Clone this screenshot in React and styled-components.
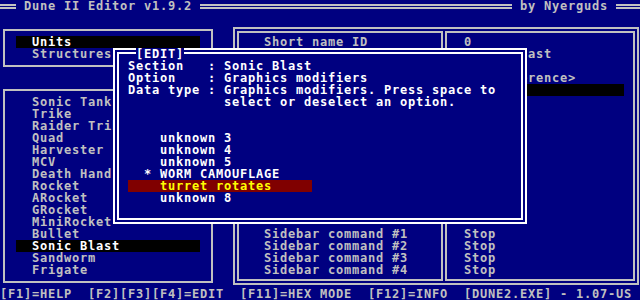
import React from 'react';
import styled, { createGlobalStyle, css } from 'styled-components';

const BLUE = '#000080';
const GREY = '#c0c0c0';
const WHITE = '#ffffff';

const GlobalStyle = createGlobalStyle`
  html, body {
    margin: 0;
    padding: 0;
    background: ${BLUE};
  }
  #root {
    width: 640px;
    height: 300px;
  }
`

// 80x25 text screen, 8x12 cells
const Screen = styled.div`
  position: relative;
  display: grid;
  grid-template-columns: repeat(80, 8px);
  grid-template-rows: repeat(25, 12px);
  width: 640px;
  height: 300px;
  overflow: hidden;
  background: ${BLUE};
  color: ${GREY};
  font-family: "DejaVu Sans Mono", "Liberation Mono", monospace;
  font-weight: bold;
  font-size: 12px;
  line-height: 12px;
  letter-spacing: 0.7754px;
  white-space: pre;
`

const TitleBar = styled.div`
  grid-column: 1 / -1;
  grid-row: 1;
  display: flex;
`

const Rule = styled.span`
  flex: none;
  width: ${p => p.$cols * 8}px;
  height: 0;
  margin-top: 4px;
  border-top: 5px double ${GREY};
`

const TitleText = styled.span`
  flex: none;
  height: 12px;
`

const Frame = styled.div`
  grid-column: ${p => p.$col + 1} / span ${p => p.$w};
  grid-row: ${p => p.$row + 1} / span ${p => p.$h};
  display: flex;
  flex-direction: column;
  min-width: 0;
  min-height: 0;
  overflow: hidden;
  ${p => p.$double ? css`
    margin: 3px 1px;
    border: 6px double ${p.$color || GREY};
    padding: 3px 1px;
  ` : css`
    margin: 5px 3px;
    border: 2px solid ${GREY};
    padding: 5px 3px;
  `}
`

// the popup sits a little higher in its cells than the panels do
const Dialog = styled(Frame)`
  position: relative;
  z-index: 10;
  overflow: visible;
  margin: 0 1px 4px;
  padding: 6px 1px 2px;
  background: ${BLUE};
  color: ${WHITE};
`

const DialogTitle = styled.span`
  position: absolute;
  top: -6px;
  left: 17px;
  height: 12px;
  background: ${BLUE};
  color: ${WHITE};
`

const ListItem = styled.div`
  flex: none;
  height: 12px;
  width: 184px;
  margin-left: 8px;
  padding-left: 16px;
  box-sizing: border-box;
  background: ${p => p.$active ? '#000000' : 'transparent'};
  color: ${p => p.$active ? WHITE : GREY};
`

const FieldRow = styled.div`
  flex: none;
  display: grid;
  grid-template-columns: 208px 1fr;
  height: 12px;
`

const FieldLabel = styled.span`
  padding-left: 24px;
  overflow: hidden;
`

const FieldValue = styled.span`
  margin-right: 8px;
  margin-left: 8px;
  padding-left: 8px;
  background: ${p => p.$active ? '#000000' : 'transparent'};
  color: ${p => p.$active ? WHITE : GREY};
`

const Divider = styled.div`
  grid-column: 56 / span 1;
  grid-row: 3 / span 22;
  position: relative;
  z-index: 1;
  margin: 7px 1px;
  border-left: 2px solid ${GREY};
  border-right: 2px solid ${GREY};
  background: ${BLUE};
`

const InfoRow = styled.div`
  flex: none;
  display: grid;
  grid-template-columns: 80px 16px 1fr;
  padding-left: 8px;
  line-height: 12px;
`

const Spacer = styled.div`
  flex: none;
  height: ${p => p.$rows * 12}px;
`

const OptionItem = styled.div`
  flex: none;
  display: flex;
  height: 12px;
  width: 184px;
  margin-left: 8px;
  padding-left: 16px;
  box-sizing: border-box;
  background: ${p => p.$active ? '#800000' : 'transparent'};
  color: ${p => p.$active ? '#ffff00' : WHITE};
`

const Mark = styled.span`
  flex: none;
  width: 16px;
`

const StatusBar = styled.div`
  grid-column: 1 / -1;
  grid-row: 25;
  display: flex;
  gap: 16px;
  color: ${GREY};
`

const sections = ['Units', 'Structures'];

const units = [
  'Sonic Tank', 'Trike', 'Raider Trike', 'Quad', 'Harvester', 'MCV',
  'Death Hand', 'Rocket', 'ARocket', 'GRocket', 'MiniRocket', 'Bullet',
  'Sonic Blast', 'Sandworm', 'Frigate',
];

const fields = [
  ['Short name ID', '0'],
  ['Short name', 'Sonic Blast'],
  ['Long name ID', '0'],
  ['Wsa file', '<No reference>'],
  ['Graphics modifiers', '0x0040', true],
  ['Hit points', '0'],
  ['Sight range', '0'],
  ['Sidebar icon', '0'],
  ['Cost', '0'],
  ['Build time', '0'],
  ['Tech level', '0'],
  ['Prerequisites', '0x00'],
  ['Build upgrades', '0'],
  ['Owner', '0x3F'],
  ['Movement type', 'Air'],
  ['', ''],
  ['Sidebar command #1', 'Stop'],
  ['Sidebar command #2', 'Stop'],
  ['Sidebar command #3', 'Stop'],
  ['Sidebar command #4', 'Stop'],
];

const options = [
  ['unknown 3'],
  ['unknown 4'],
  ['unknown 5'],
  ['WORM CAMOUFLAGE', true],
  ['turret rotates', false, true],
  ['unknown 8'],
];

const keys = [
  '[F1]=HELP', '[F2][F3][F4]=EDIT', '[F11]=HEX MODE', '[F12]=INFO',
  '[DUNE2.EXE] - 1.07-US',
];

export default function App() {
  return (
    <>
      <GlobalStyle />
      <Screen>
        <TitleBar>
          <Rule $cols={2} />
          <TitleText> Dune II Editor v1.9.2 </TitleText>
          <Rule $cols={39} />
          <TitleText> by Nyerguds </TitleText>
          <Rule $cols={3} />
        </TitleBar>

        <Frame $col={0} $row={2} $w={27} $h={4}>
          {sections.map(s => (
            <ListItem key={s} $active={s === 'Units'}>{s}</ListItem>
          ))}
        </Frame>

        <Frame $col={0} $row={7} $w={27} $h={17}>
          {units.map(u => (
            <ListItem key={u} $active={u === 'Sonic Blast'}>{u}</ListItem>
          ))}
        </Frame>

        <Frame $double $col={29} $row={2} $w={51} $h={22}>
          {fields.map(([label, value, active], i) => (
            <FieldRow key={i}>
              <FieldLabel>{label}</FieldLabel>
              <FieldValue $active={active}>{value}</FieldValue>
            </FieldRow>
          ))}
        </Frame>
        <Divider />

        <Dialog $double $color={WHITE} $col={14} $row={4} $w={52} $h={15}>
          <DialogTitle>[EDIT]</DialogTitle>
          <InfoRow><span>Section</span><span>:</span><span>Sonic Blast</span></InfoRow>
          <InfoRow><span>Option</span><span>:</span><span>Graphics modifiers</span></InfoRow>
          <InfoRow>
            <span>Data type</span><span>:</span>
            <span>{'Graphics modifiers. Press space to\nselect or deselect an option.'}</span>
          </InfoRow>
          <Spacer $rows={2} />
          {options.map(([label, checked, active]) => (
            <OptionItem key={label} $active={active}>
              <Mark>{checked ? '*' : ''}</Mark>
              <span>{label}</span>
            </OptionItem>
          ))}
        </Dialog>

        <StatusBar>
          {keys.map(k => <span key={k}>{k}</span>)}
        </StatusBar>
      </Screen>
    </>
  );
}
